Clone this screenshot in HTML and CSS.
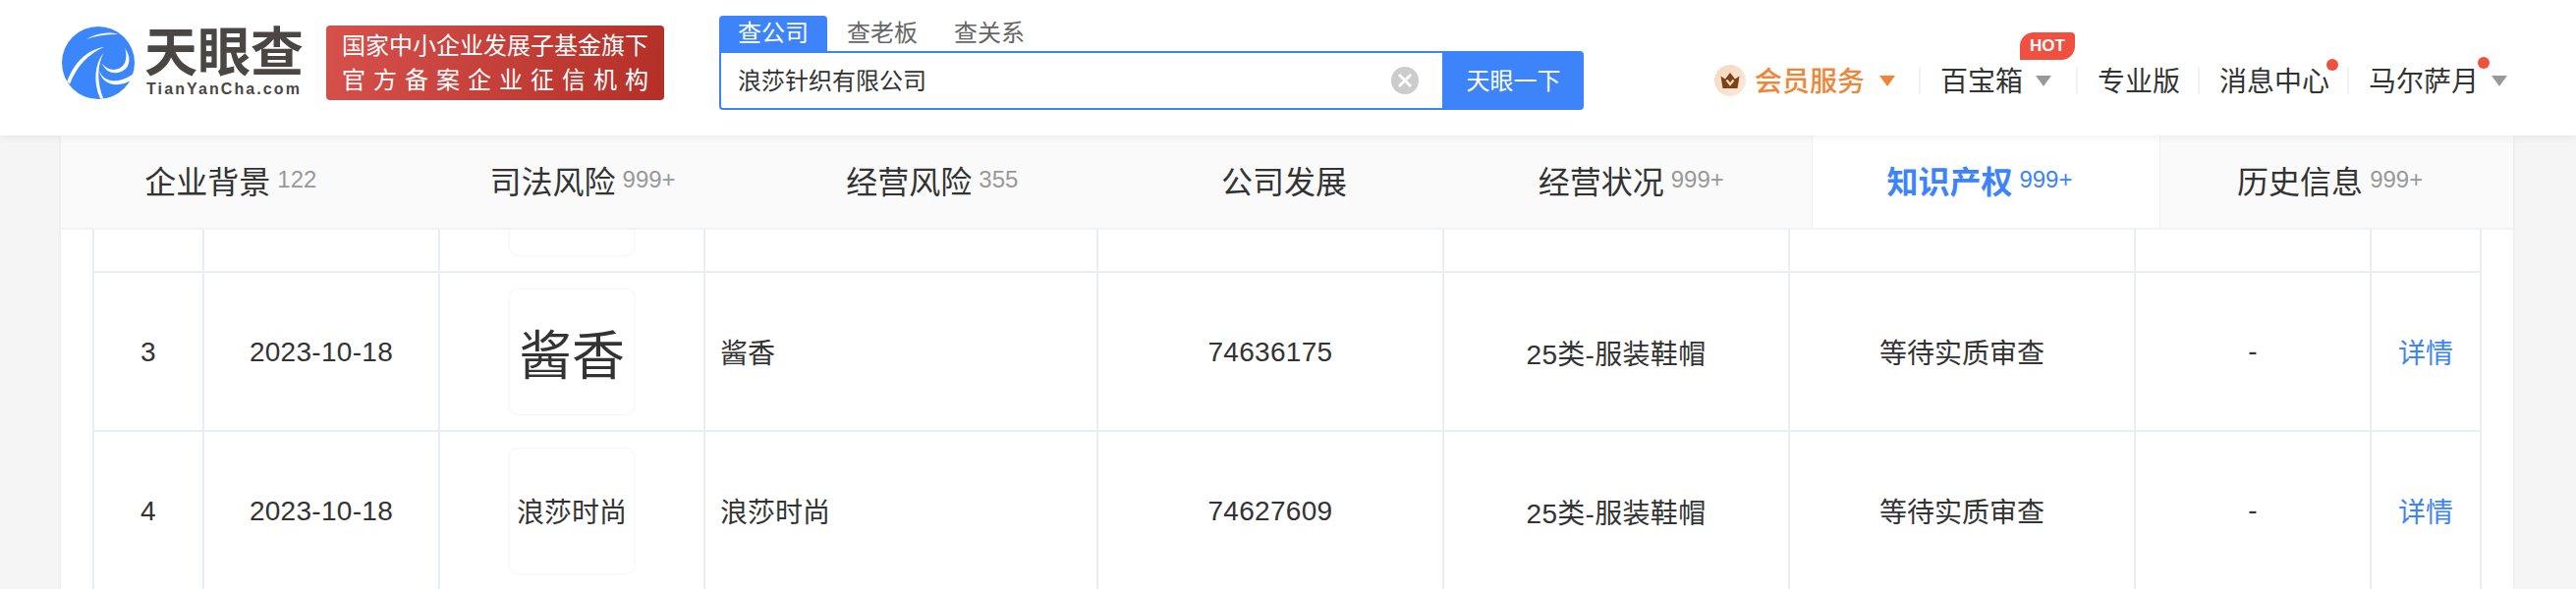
FILE: index.html
```html
<!DOCTYPE html>
<html lang="zh-CN">
<head>
<meta charset="utf-8">
<title>浪莎针织有限公司 - 天眼查</title>
<link rel="stylesheet" href="styles.css">
</head>
<body>
<header class="topbar">
  <div class="brand">
    <svg class="brand-mark" viewBox="0 0 222 222" aria-hidden="true">
      <circle cx="111" cy="111" r="111" fill="#3b86fb"/>
      <g fill="#fff">
        <path d="M74 39C105 21 140 14 172 24C140 23 105 28 74 39Z"/>
        <path d="M16 168C35 115 72 72 130 62C82 82 44 122 24 176Z"/>
        <path d="M127 80C100 115 95 170 117 220L127 221C106 170 108 120 127 80Z"/>
        <path d="M192 66C206 85 210 105 200 122C185 145 140 155 122 112C140 138 175 138 190 115C198 100 198 82 192 66Z"/>
        <path d="M114 135C128 172 175 178 222 142L219 158C175 192 122 180 114 135Z"/>
      </g>
    </svg>
    <div class="wordmark">
      <div class="wordmark-cn">天眼查</div>
      <div class="wordmark-en">TianYanCha.com</div>
    </div>
  </div>
  <div class="banner">
    <div class="banner-line">国家中小企业发展子基金旗下</div>
    <div class="banner-line banner-line-wide">官方备案企业征信机构</div>
  </div>
  <div class="search">
    <div class="search-tabs">
      <span class="search-tab search-tab-active">查公司</span>
      <span class="search-tab">查老板</span>
      <span class="search-tab">查关系</span>
    </div>
    <div class="search-box">
      <div class="search-input">浪莎针织有限公司</div>
      <svg class="search-clear" viewBox="0 0 28 28" aria-hidden="true">
        <circle cx="14" cy="14" r="14" fill="#ccc"/>
        <path d="M8 8L20 20M20 8L8 20" stroke="#fff" stroke-width="2.800" fill="none"/>
      </svg>
      <div class="search-btn">天眼一下</div>
    </div>
  </div>
  <nav class="nav">
    <div class="nav-vip">
      <svg class="vip-icon" viewBox="0 0 32 32" aria-hidden="true">
        <defs>
          <linearGradient id="vipbg" x1="0" y1="0" x2="1" y2="1">
            <stop offset="0" stop-color="#f6d6bb"/>
            <stop offset="1" stop-color="#fbeadc"/>
          </linearGradient>
        </defs>
        <circle cx="16" cy="16" r="16" fill="url(#vipbg)"/>
        <path d="M6.500 11.500L11 14.500L16 8L21 14.500L25.500 11.500L23.500 24H8.500Z" fill="#7f4218"/>
        <path d="M12.500 15.500L16 20L19.500 15.500" fill="none" stroke="#f6dcc6" stroke-width="2.200"/>
      </svg>
      <span class="vip-label">会员服务</span>
      <i class="caret caret-orange"></i>
    </div>
    <div class="nav-item nav-item-box">
      <span class="nav-label">百宝箱<b class="hot">HOT</b></span>
      <i class="caret"></i>
    </div>
    <div class="nav-item"><span class="nav-label">专业版</span></div>
    <div class="nav-item"><span class="nav-label">消息中心<i class="dot dot-msg"></i></span></div>
    <div class="nav-item nav-item-user">
      <span class="nav-label">马尔萨月<i class="dot dot-user"></i></span>
      <i class="caret"></i>
    </div>
  </nav>
</header>

<main class="card">
  <div class="tabs">
    <div class="tab tab-first"><span class="tab-name">企业背景</span><span class="tab-count">122</span></div>
    <div class="tab"><span class="tab-name">司法风险</span><span class="tab-count">999+</span></div>
    <div class="tab"><span class="tab-name">经营风险</span><span class="tab-count">355</span></div>
    <div class="tab tab-solo"><span class="tab-name">公司发展</span></div>
    <div class="tab"><span class="tab-name">经营状况</span><span class="tab-count">999+</span></div>
    <div class="tab tab-active"><span class="tab-name">知识产权</span><span class="tab-count">999+</span></div>
    <div class="tab"><span class="tab-name">历史信息</span><span class="tab-count">999+</span></div>
  </div>
  <div class="table-clip">
    <table class="marks">
      <colgroup>
        <col class="c-idx"><col class="c-date"><col class="c-img"><col class="c-name"><col class="c-no"><col class="c-cat"><col class="c-state"><col class="c-misc"><col class="c-act">
      </colgroup>
      <tbody>
        <tr>
          <td></td><td></td>
          <td><div class="mark-box"></div></td>
          <td></td><td></td><td></td><td></td><td></td><td></td>
        </tr>
        <tr>
          <td class="num">3</td>
          <td class="num">2023-10-18</td>
          <td><div class="mark-box mark-box-big">酱香</div></td>
          <td class="cell-left">酱香</td>
          <td class="num">74636175</td>
          <td class="num">25类-服装鞋帽</td>
          <td>等待实质审查</td>
          <td>-</td>
          <td><a class="detail">详情</a></td>
        </tr>
        <tr>
          <td class="num">4</td>
          <td class="num">2023-10-18</td>
          <td><div class="mark-box">浪莎时尚</div></td>
          <td class="cell-left">浪莎时尚</td>
          <td class="num">74627609</td>
          <td class="num">25类-服装鞋帽</td>
          <td>等待实质审查</td>
          <td>-</td>
          <td><a class="detail">详情</a></td>
        </tr>
      </tbody>
    </table>
  </div>
</main>
</body>
</html>
```
FILE: styles.css
```css
* { box-sizing: border-box; }
html, body { margin: 0; height: 600px; overflow: hidden; }
body {
  background: #f5f5f5;
  color: #333;
  font-family: "Liberation Sans", "Noto Sans CJK SC", sans-serif;
}

/* top bar */
.topbar {
  position: relative;
  z-index: 2;
  display: flex;
  align-items: center;
  height: 138px;
  padding: 0 70px 10px 63px;
  background: #fff;
  box-shadow: 0 2px 8px rgba(0, 0, 0, .06);
}
.brand { display: flex; align-items: center; gap: 12px; }
.brand-mark { width: 74px; height: 74px; display: block; }
.wordmark { width: 158px; color: #4a4644; }
.wordmark-cn {
  font-size: 54px;
  line-height: 50px;
  font-weight: 700;
  margin-left: -2px;
  white-space: nowrap;
}
.wordmark-en {
  margin-top: 3px;
  font-size: 16px;
  line-height: 18px;
  font-weight: 700;
  letter-spacing: 2.100px;
  white-space: nowrap;
}
.banner {
  width: 344px;
  height: 76px;
  margin-left: 25px;
  padding-top: 3px;
  border-radius: 4px;
  background: linear-gradient(100deg, #d6514c, #b32f27);
  color: #fff;
  text-align: center;
  font-size: 24px;
}
.banner-line { line-height: 35px; white-space: nowrap; }
.banner-line-wide { letter-spacing: 8px; margin-right: -8px; }

/* search */
.search { width: 880px; margin-left: 56px; }
.search-tabs { display: flex; height: 36px; }
.search-tab {
  width: 110px;
  padding-left: 19px;
  font-size: 24px;
  line-height: 35px;
  color: #666;
  white-space: nowrap;
}
.search-tab + .search-tab { width: 109px; padding-left: 20px; }
.search-tab-active {
  background: #3d84fa;
  color: #fff;
  border-radius: 4px 4px 0 0;
}
.search-box {
  display: flex;
  align-items: center;
  height: 60px;
  border: 2px solid #3d84fa;
  border-radius: 0 4px 4px 4px;
}
.search-input {
  flex: 1;
  padding: 2px 0 0 17px;
  font-size: 24px;
  line-height: 54px;
  color: #333;
}
.search-clear { width: 28px; height: 28px; margin-right: 24px; }
.search-btn {
  width: 142px;
  height: 56px;
  padding: 2px 0 0 3px;
  background: #3d84fa;
  color: #fff;
  font-size: 24px;
  line-height: 54px;
  text-align: center;
}

/* right nav */
.nav {
  display: flex;
  align-items: center;
  margin-left: auto;
  margin-top: 36px;
  height: 28px;
  font-size: 28px;
  color: #333;
}
.nav-vip { display: flex; align-items: center; padding-right: 24px; }
.vip-icon { width: 32px; height: 32px; margin-right: 9px; }
.vip-label { padding-top: 3px; color: #ef8537; line-height: 28px; font-weight: 500; white-space: nowrap; }
.nav-vip .caret { margin-left: 15px; }
.nav-item {
  display: flex;
  align-items: center;
  height: 28px;
  padding: 0 18px 0 20px;
  border-left: 2px solid #f1f1f1;
}
.nav-item-box { padding-right: 25px; }
.nav-item-user { padding-right: 0; }
.nav-label { position: relative; display: block; padding-top: 3px; line-height: 28px; white-space: nowrap; }
.caret {
  display: block;
  width: 0;
  height: 0;
  margin-left: 13px;
  border-style: solid;
  border-width: 11px 8px 0;
  border-color: #999 transparent transparent;
}
.caret-orange { border-top-color: #ef8537; border-width: 11px 8.500px 0; }
.hot {
  position: absolute;
  left: 81px;
  top: -34px;
  width: 56px;
  height: 28px;
  border-radius: 14px 4px 14px 0;
  background: #ef5040;
  color: #fff;
  font-size: 17px;
  font-weight: 700;
  line-height: 28px;
  text-align: center;
}
.dot {
  position: absolute;
  width: 12px;
  height: 12px;
  border-radius: 50%;
  background: #ef5040;
}
.dot-msg { right: -9px; top: -7px; }
.dot-user { right: -11px; top: -9px; }

/* card */
.card {
  width: 2496px;
  height: 462px;
  margin-left: 62px;
  background: #fff;
  box-shadow: 0 0 4px rgba(0, 0, 0, .07);
}
.tabs {
  display: flex;
  height: 96px;
  padding: 0 3px;
  background: #fafafa;
  border-bottom: 2px solid #f0f1f2;
}
.tab {
  display: flex;
  align-items: center;
  justify-content: center;
  gap: 7px;
  width: 356px;
  padding: 0 11px 4px 0;
  border-left: 1px solid transparent;
  border-right: 1px solid transparent;
  white-space: nowrap;
}
.tab-first { padding-right: 16px; }
.tab-solo { padding-right: 6px; }
.tab-name { font-size: 32px; color: #333; }
.tab-count { font-size: 24px; color: #999; }
.tab-active {
  background: #fff;
  border-color: #eef0f2;
  padding-right: 13px;
}
.tab-active .tab-name { color: #3d84fa; font-weight: 700; }
.tab-active .tab-count { color: #3d84fa; }

/* table */
.table-clip { height: 366px; overflow: hidden; }
.marks {
  width: 2432px;
  margin: -118px 0 0 32px;
  table-layout: fixed;
  border-collapse: separate;
  border-spacing: 0;
  font-size: 28px;
  color: #333;
}
.c-idx { width: 112px; }
.c-date { width: 240px; }
.c-img { width: 270px; }
.c-name { width: 400px; }
.c-no, .c-cat, .c-state { width: 352px; }
.c-misc { width: 240px; }
.c-act { width: 114px; }
.marks td {
  height: 162px;
  padding: 0;
  border-left: 2px solid #e6eef6;
  border-bottom: 2px solid #e6eef6;
  text-align: center;
  vertical-align: middle;
}
.marks td:last-child { border-right: 2px solid #e6eef6; }
.marks td.cell-left { padding-left: 15px; text-align: left; }
.marks td.num { padding-top: 2px; letter-spacing: .3px; }
.mark-box {
  display: flex;
  align-items: center;
  justify-content: center;
  width: 126px;
  height: 127px;
  margin: 0 auto;
  border-radius: 8px;
  background: #fff;
  box-shadow: 0 0 3px rgba(0, 0, 0, .09);
  white-space: nowrap;
}
.mark-box-big { font-size: 54px; }
.detail { color: #3d84fa; }
```
